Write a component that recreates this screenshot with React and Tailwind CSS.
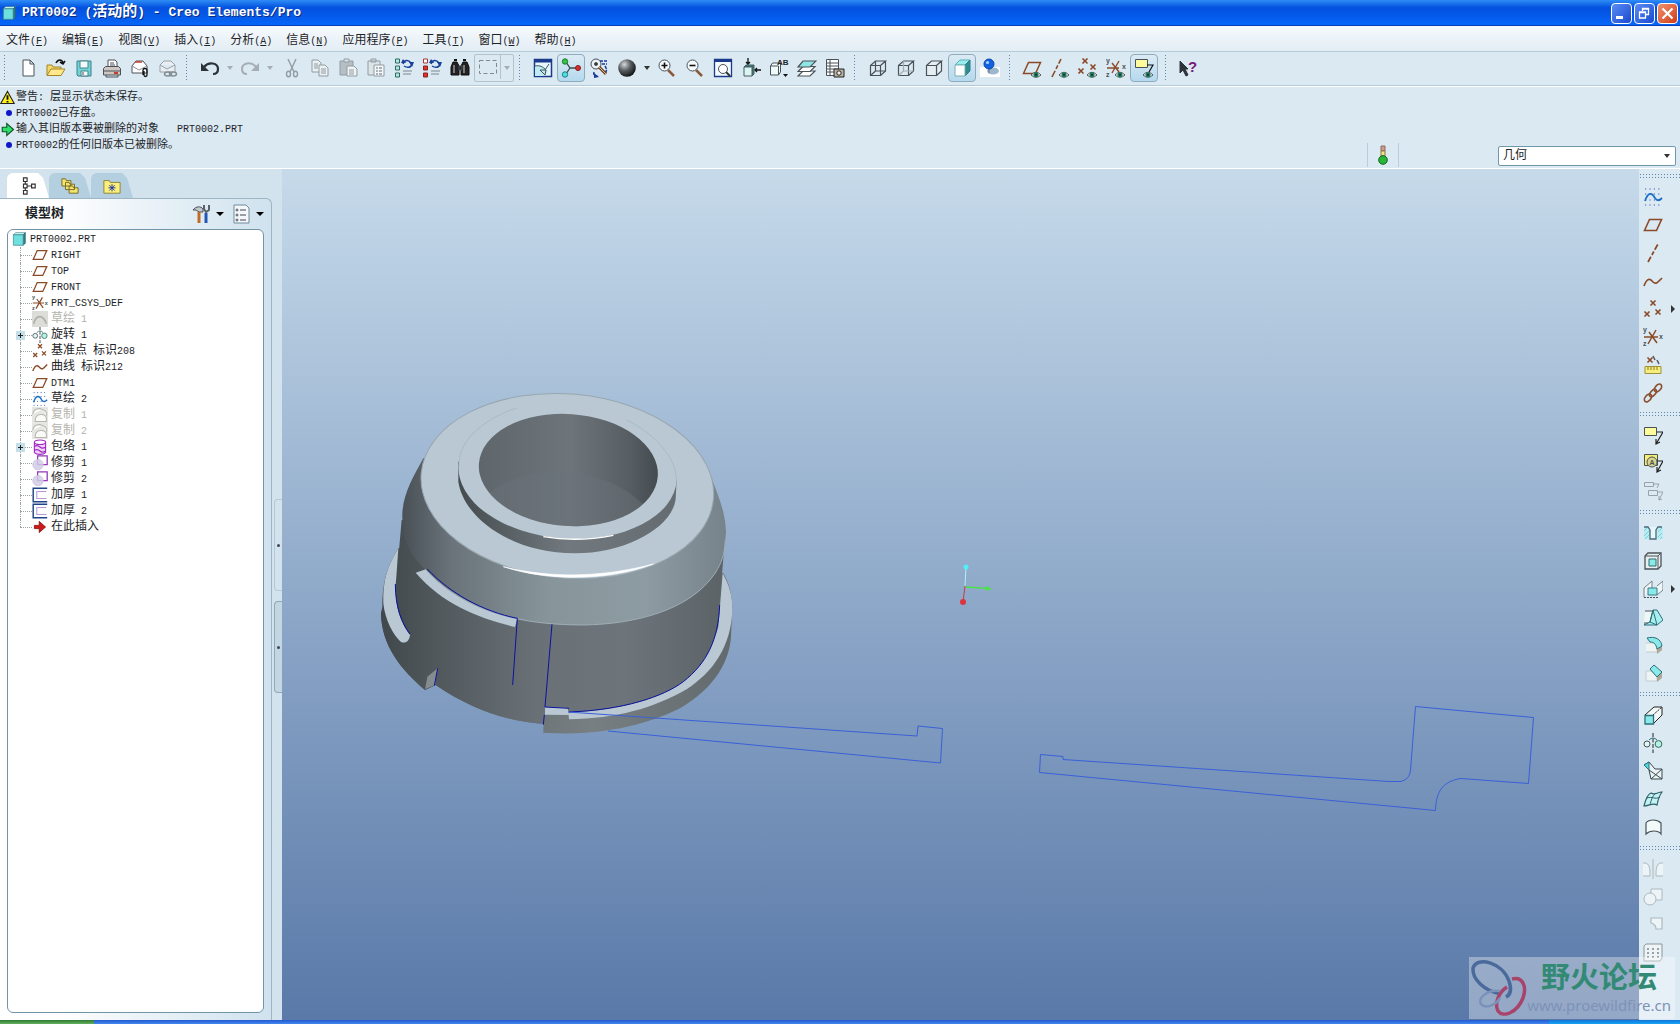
import { Fragment, useState } from 'react';
import clsx from 'clsx';

const Icon = ({ children, className = 'h-5 w-5' }) => (
  <svg viewBox="0 0 20 20" className={clsx('shrink-0', className)} fill="none" stroke="#4a5258" aria-hidden="true">
    {children}
  </svg>
);

const cross = (x, y, c = '#8a4a28', r = 2.5) => (
  <path d={`M${x - r} ${y - r}l${2 * r} ${2 * r}m0 ${-2 * r}l${-2 * r} ${2 * r}`} stroke={c} strokeWidth="1.6" />
);

const Eye = () => (
  <g stroke="none">
    <path d="M9 17q5-5.500 10 0q-5 4.500-10 0z" fill="#f4f8f8" stroke="#333" strokeWidth=".8" />
    <circle cx="14" cy="16.800" r="2.600" fill="#1f7a62" />
    <circle cx="14" cy="16.800" r="1" fill="#0c3028" />
  </g>
);

const Letter = ({ x, y, size = 7, fill = '#4a5258', children }) => (
  <text x={x} y={y} fontSize={size} fill={fill} stroke="none" fontWeight="bold" className="font-['Liberation_Sans',sans-serif]">
    {children}
  </text>
);

const Box = ({ hidden, fill = 'none' }) => (
  <g strokeWidth="1.200">
    <path d="M2.500 7.500h10v10h-10zM2.500 7.500l5-4.500h10l-5 4.500M17.500 3v10l-5 4.500" fill={fill} />
    {hidden && <path d="M7.500 3v10h10M7.500 13l-5 4.500" stroke={hidden} />}
  </g>
);

const ModelBox = () => (
  <>
    <path d="M2 4l3-3h14l-3 3z" fill="#d8ffff" stroke="#3c8488" />
    <path d="M16 4l3-3v15l-3 3z" fill="#2e7f86" stroke="#28666c" />
    <path d="M2 4h14v15H2z" fill="#6ee0e0" stroke="#3c8488" />
  </>
);

const icons = {
  blank: <path d="M5 2h7l4 4v12H5zM12 2v4h4" fill="#fff" />,
  open: (
    <>
      <path d="M1 17V7h5l1 2h8v3" fill="#f3d96b" stroke="#a58427" />
      <path d="M1 17.500l4-6.500h14l-4 6.500z" fill="#ffe98a" stroke="#a58427" />
      <path d="M10 5c2-4 6-4 7 0m-3-1l3 2 2-3" stroke="#111" strokeWidth="1.600" />
    </>
  ),
  save: (
    <>
      <path d="M3 3h14v15H4l-1-1z" fill="#6fd4d6" stroke="#3d808a" />
      <path d="M6 3h8v7H6zM7 13h7v5H7z" fill="#f4fafb" stroke="#48828a" />
      <path d="M9 14v3" />
    </>
  ),
  print: (
    <>
      <path d="M6 10V2h7l2 2v6" fill="#fff" />
      <path d="M8 5h4M8 7h5" />
      <path d="M1.500 10.500l2-2h13l2 2v6.500h-17z" fill="#cfc6c2" />
      <path d="M2 13h16M4 17v2h12v-2" />
      <path d="M12 15h4" stroke="#c2402f" strokeWidth="2" />
    </>
  ),
  mailAttach: (
    <>
      <path d="M2 15V8l4-5h7l4 5v7z" fill="#fff" />
      <path d="M2 8l7 4 8-4" stroke="#8b9297" />
      <path d="M5 4h7" stroke="#c2402f" strokeWidth="1.500" />
      <path d="M13 17v-5c0-2 4-2 4 0v5c0 2-3 2-3 0v-4" stroke="#111" strokeWidth="1.300" />
    </>
  ),
  mailLink: (
    <>
      <path d="M2 14V7l4-4h7l4 4v7zM2 7l7 4 8-4" fill="#e8eef1" stroke="#98a2a8" />
      <ellipse cx="10" cy="16" rx="3.500" ry="2" stroke="#828c92" strokeWidth="1.500" />
      <ellipse cx="15" cy="16" rx="3.500" ry="2" stroke="#828c92" strokeWidth="1.500" />
    </>
  ),
  undo: (
    <>
      <path d="M4 9c5-6 14-4 14 2 0 3-2 5-5 5" stroke="#2b3338" strokeWidth="2.200" />
      <path d="M1 5v8h8z" fill="#2b3338" stroke="none" />
    </>
  ),
  redo: (
    <>
      <path d="M16 9C11 3 2 5 2 11c0 3 2 5 5 5" stroke="#a4aeb4" strokeWidth="2" />
      <path d="M19 5v8h-8z" fill="#a4aeb4" stroke="none" />
    </>
  ),
  cut: (
    <g stroke="#929ca2" strokeWidth="1.400">
      <path d="M6 1l6 13M14 1L8 14" />
      <ellipse cx="6.500" cy="16" rx="2" ry="2.800" />
      <ellipse cx="13.500" cy="16" rx="2" ry="2.800" />
    </g>
  ),
  copy: (
    <g stroke="#929ca2" fill="#eaf0f3">
      <path d="M2 2h6l3 3v9H2z" />
      <path d="M9 7h6l3 3v8H9zM11 11h5M11 13h5M11 15h5M4 6h4M4 8h4M4 10h4" />
    </g>
  ),
  paste: (
    <g stroke="#929ca2">
      <path d="M2 3h13v14H2z" fill="#b4bec3" />
      <path d="M6 1h5v3H6z" fill="#dbe2e6" />
      <path d="M9 8h7l3 3v7H9zM11 12h5M11 14h5M11 16h5" fill="#eef3f5" />
    </g>
  ),
  pasteSpecial: (
    <g stroke="#929ca2">
      <path d="M2 3h12v14H2zM5 1h5v3H5z" fill="#dce4e8" />
      <path d="M8 7h10v11H8z" fill="#f4f8fa" />
      <path d="M10 10h2m1 0h3M10 13h2m1 0h3M10 16h2m1 0h3" strokeWidth="1.500" />
    </g>
  ),
  regen: (
    <>
      <path d="M1.500 1h4v4h-4zM1.500 8h4v4h-4zM1.500 15h4v4h-4z" fill="#b9e6dc" stroke="#2a6b60" />
      <path d="M9 6c1-4 5-5 8-1M18 6c-1 4-5 4-8 2" stroke="#173f9a" strokeWidth="1.500" />
      <path d="M15 4h5l-2 5zM7 5h5l-3-4z" fill="#173f9a" stroke="none" />
      <path d="M9 13h9M9 16h8" stroke="#7d878c" />
    </>
  ),
  regenManager: (
    <>
      <path d="M1.500 1h4v4h-4z" fill="#fff" stroke="#a13a34" />
      <path d="M1.500 8h4v4h-4zM1.500 15h4v4h-4z" fill="#e0322b" stroke="#8a2420" />
      <path d="M9 6c1-4 5-5 8-1M18 6c-1 4-5 4-8 2" stroke="#173f9a" strokeWidth="1.500" />
      <path d="M15 4h5l-2 5zM7 5h5l-3-4z" fill="#173f9a" stroke="none" />
      <path d="M9 13h9M9 16h8" stroke="#7d878c" />
    </>
  ),
  find: (
    <>
      <path d="M3 4h4l2 4v9H1V9zM13 4h4l2 5v8h-8V8z" fill="#222" stroke="#111" />
      <path d="M9 8h3v4H9z" fill="#222" />
      <path d="M4 7v8M14 7v8" stroke="#c8d0d4" />
      <path d="M4 2h3M13 2h3" stroke="#111" strokeWidth="2" />
    </>
  ),
  select: <path d="M1.500 3.500h17v13h-17z" stroke="#7f8a90" strokeDasharray="4 2.500" />,
  repaint: (
    <>
      <path d="M1.500 1.500h17v17h-17z" fill="#e8f6fb" stroke="#1b3a8c" strokeWidth="1.500" />
      <path d="M2 3h16" stroke="#1b3a8c" strokeWidth="3" />
      <path d="M2 8c6-2 10 1 13 6l-5 4H2z" fill="#bfeaf0" stroke="none" />
      <path d="M2 8c5-1 8 1 11 4M16 6l-4 6M7 12l5 5 1-5z" stroke="#44525a" />
    </>
  ),
  spinCenter: (
    <>
      <path d="M5 4l4 6h8M9 10l-4 6" stroke="#3d4a50" strokeWidth="1.300" />
      <circle cx="4" cy="3.500" r="2.700" fill="#39c24a" stroke="#1b7a2a" />
      <circle cx="17" cy="10" r="2.500" fill="#d8302c" stroke="#8a1a18" />
      <circle cx="4" cy="16.500" r="2.700" fill="#4fe0e0" stroke="#1b7f86" />
    </>
  ),
  orientMode: (
    <>
      <circle cx="7" cy="6" r="5" fill="#eef4f6" />
      <circle cx="7" cy="6" r="1.500" fill="#333" />
      <path d="M11 3h8M13 6h5M16 8c2 3 2 5 0 7M5 14c-1 3 1 5 4 4" stroke="#1b3a9c" strokeWidth="1.500" strokeDasharray="3 1" />
      <path d="M10 9l7 7" stroke="#6b4020" strokeWidth="3" />
      <path d="M10 9l7 7" stroke="#e2b98c" />
      <path d="M5 15l5 4-5 1z" fill="#1b3a9c" stroke="none" />
    </>
  ),
  sphere: (
    <>
      <defs>
        <radialGradient id="sphere" cx=".35" cy=".3" r=".7">
          <stop offset="0" stopColor="#d4d8da" />
          <stop offset=".5" stopColor="#5a5f63" />
          <stop offset="1" stopColor="#16191b" />
        </radialGradient>
      </defs>
      <circle cx="10" cy="10" r="8.800" fill="url(#sphere)" stroke="none" />
    </>
  ),
  zoomIn: (
    <>
      <path d="M11 12l6 6" stroke="#8a5a3a" strokeWidth="2.500" />
      <circle cx="7.500" cy="7.500" r="5.500" fill="#f5fafc" />
      <path d="M4.500 7.500h6M7.500 4.500v6" stroke="#111" strokeWidth="1.600" />
    </>
  ),
  zoomOut: (
    <>
      <path d="M11 12l6 6" stroke="#8a5a3a" strokeWidth="2.500" />
      <circle cx="7.500" cy="7.500" r="5.500" fill="#f5fafc" />
      <path d="M4.500 7.500h6" stroke="#111" strokeWidth="1.600" />
    </>
  ),
  refit: (
    <>
      <path d="M1.500 1.500h17v17h-17z" fill="#f2fafd" stroke="#1b3a8c" strokeWidth="1.300" />
      <path d="M2 3h16" stroke="#1b3a8c" strokeWidth="2" />
      <path d="M13 14l4 4" stroke="#333" strokeWidth="2" />
      <circle cx="10" cy="11" r="4.500" fill="#fff" />
    </>
  ),
  reorient: (
    <>
      <path d="M3 9l2-2h8l-2 2zM11 9l2-2v9l-2 2z" fill="#2e8f8a" stroke="#4a5a5e" />
      <path d="M3 9h8v9H3z" fill="#d9f6f4" stroke="#4a5a5e" />
      <path d="M7 0v6m-2-2l2 2 2-2M20 12h-6m2-2l-2 2 2 2" stroke="#111" strokeWidth="1.300" />
    </>
  ),
  savedViews: (
    <>
      <path d="M1.500 8l2-3h8v9l-2 3h-8z" fill="#eefafa" />
      <path d="M1.500 8h8v9" />
      <Letter x="8" y="7" size="8" fill="#222">AB</Letter>
      <path d="M14 16h5l-2.500 3z" fill="#111" stroke="none" />
    </>
  ),
  layers: (
    <g strokeWidth="1.200">
      <path d="M1 18l5-5h12l-5 5z" fill="#fff" />
      <path d="M1 13.500l5-5h12l-5 5z" fill="#fff" />
      <path d="M1 9l5-6h13l-6 6z" fill="#8ee6e4" />
    </g>
  ),
  viewManager: (
    <>
      <path d="M1.500 1.500h12v16h-12zM1.500 5h12M1.500 8h12M1.500 11h12M1.500 14h12M5 1.500v16" fill="#fff" />
      <path d="M9 11h10v8H9z" fill="#b9b4a0" stroke="#222" />
      <circle cx="14" cy="15" r="2.200" fill="#f2f2f2" stroke="#222" />
    </>
  ),
  wireframe: <Box hidden="#4a5258" />,
  hiddenLine: <Box hidden="#a2adb2" />,
  noHidden: <Box fill="#e4eef3" />,
  shaded: (
    <>
      <path d="M3 7l5-5h10l-5 5z" fill="#9becee" stroke="#5bb2b8" />
      <path d="M13 7l5-5v11l-5 5z" fill="#2f8d92" stroke="#2f7d83" />
      <path d="M3 7h10v11H3z" fill="#fff" stroke="#7ab0b6" />
    </>
  ),
  enhanced: (
    <>
      <path d="M0 9h20v10H0z" fill="#fff" stroke="none" />
      <ellipse cx="13" cy="13" rx="6" ry="3.500" fill="#9cb8cf" stroke="none" />
      <path d="M9 10v5" stroke="#7a8a94" strokeWidth="1.500" />
      <circle cx="9" cy="6" r="5" fill="#1262e0" stroke="#0c48ac" />
      <circle cx="7.500" cy="4.500" r="1.600" fill="#a8d0ff" stroke="none" />
    </>
  ),
  plane: <path d="M1.500 15.500l5-11h12l-5 11z" stroke="#8a4a28" strokeWidth="1.600" />,
  planeEye: (
    <>
      <path d="M1.500 15.500l5-11h12l-5 11z" stroke="#8a4a28" strokeWidth="1.500" />
      <Eye />
    </>
  ),
  axis: <path d="M5 19L15 1" stroke="#8a4a28" strokeWidth="1.700" strokeDasharray="6 2 4 2" />,
  axisEye: (
    <>
      <path d="M2 19L11 1" stroke="#8a4a28" strokeWidth="1.600" strokeDasharray="7 2 4 2" />
      <Eye />
    </>
  ),
  points: (
    <>
      {cross(10, 4)}
      {cross(4, 15)}
      {cross(15, 13)}
    </>
  ),
  pointsEye: (
    <>
      {cross(7, 3)}
      {cross(3, 13)}
      {cross(15, 9)}
      <Eye />
    </>
  ),
  csys: (
    <>
      <path d="M1 10h14M6 5l8 11M13 3L5 17" stroke="#8a4a28" strokeWidth="1.500" />
      <Letter x="0" y="5">y</Letter>
      <Letter x="16" y="12">x</Letter>
      <Letter x="0" y="19">z</Letter>
    </>
  ),
  csysEye: (
    <>
      <path d="M1 10h12M6 5l7 9M13 3L6 15" stroke="#8a4a28" strokeWidth="1.400" />
      <Letter x="0" y="5">y</Letter>
      <Letter x="16" y="11">x</Letter>
      <Letter x="0" y="19">z</Letter>
      <Eye />
    </>
  ),
  noteEye: (
    <>
      <path d="M1.500 1.500h12v8h-12z" fill="#fdfb9c" />
      <path d="M13 7h6l-4 7" stroke="#111" strokeWidth="1.200" />
      <Eye />
    </>
  ),
  help: (
    <>
      <path d="M2 3v12l3-3 3 6 2-1-3-6h3z" fill="#2c343a" stroke="#2c343a" />
      <Letter x="10" y="14" size="15" fill="#7a1a78">?</Letter>
    </>
  ),
  sketch: (
    <>
      <path d="M2 2h17M2 7h17M2 13h17M2 18h17" stroke="#3a62b8" strokeDasharray="1.200 3.200" strokeWidth="1.200" />
      <path d="M2 14c3-9 7-9 10-3 2 3 4 3 7 0" stroke="#1c6fc4" strokeWidth="1.800" />
    </>
  ),
  curve: <path d="M1 15c3-8 6-8 9-4 3 3 5 0 9-4" stroke="#8a4a28" strokeWidth="1.700" />,
  analysis: (
    <>
      {cross(7, 5)}
      <path d="M10 1l2 4m2 0l2 4" stroke="#555" strokeWidth="1.500" />
      <path d="M2 11.500h16v7H2z" fill="#f5ee7c" stroke="#a0923a" />
      <path d="M5 12v3M8 12v3M11 12v3M14 12v3" stroke="#8a7a20" />
    </>
  ),
  chain: (
    <g stroke="#8a5030" strokeWidth="1.700">
      <ellipse cx="5" cy="15" rx="4.500" ry="2.800" transform="rotate(-50 5 15)" />
      <ellipse cx="10" cy="10" rx="4.500" ry="2.400" transform="rotate(-50 10 10)" />
      <ellipse cx="15" cy="5" rx="4.500" ry="2.800" transform="rotate(-50 15 5)" />
    </g>
  ),
  note: (
    <>
      <path d="M1.500 2.500h12v8h-12z" fill="#fdfb9c" />
      <path d="M14 7h6l-7 12m0-5v5l4-2" stroke="#222" strokeWidth="1.200" />
    </>
  ),
  annotation: (
    <>
      <path d="M1.500 1.500h13v11h-13z" fill="#f6ee72" />
      <circle cx="9" cy="9" r="5" fill="#d8d58f" />
      <Letter x="6.500" y="12" size="7">A</Letter>
      <path d="M14 8h6l-6 11m0-5v5l4-2" stroke="#222" strokeWidth="1.200" />
    </>
  ),
  annotationSet: (
    <g stroke="#98a3a9">
      <path d="M1.500 1.500h9v4h-9zM5.500 9.500h9v5h-9zM11 3h5l-2 4M15 11h5l-4 8m0-4v4l3-1" />
    </g>
  ),
  hole: (
    <>
      <path d="M1 4h5l2 3v9h6V7l2-3h4v12H1z" fill="#b6ecf2" stroke="none" />
      <path d="M1 8l4-4M1 13l6-6M2 16l5-5M15 9l4-4M15 14l4-4M17 16l2-2" stroke="#7ccfd8" />
      <path d="M1 4h4l2 3v9h6V7l2-3h4" fill="#e6f6fa" stroke="#4a6a78" strokeWidth="1.300" />
    </>
  ),
  shell: (
    <>
      <path d="M2 5l3-3h13v13l-3 3H2z" fill="#e8efee" strokeWidth="1.300" />
      <path d="M2 5h13v13M15 5l3-3" />
      <path d="M6 8h7v7H6z" fill="#8aeaea" stroke="#356a70" />
    </>
  ),
  rib: (
    <>
      <path d="M1 18V9l8-7v7M14 16l6-5V2l-6 5" stroke="#777f85" fill="#eef6f8" />
      <path d="M5 9h9v7H5z" fill="#8aeaea" stroke="#3a7a84" />
      <path d="M1 18.500h14" strokeDasharray="2 1" />
    </>
  ),
  draft: (
    <>
      <path d="M2 4h8l-3 12H1" fill="#eef6f8" />
      <path d="M10 3h4l6 10-6 5H1l6-3z" fill="#a8f0f0" stroke="#2e6f7a" />
      <path d="M10 3L7 15l7 3M10 3l4 15" stroke="#2e6f7a" />
    </>
  ),
  round: (
    <>
      <path d="M3 8h6c4 0 5 3 5 9H3" fill="#eef4f4" stroke="#c3ccd0" />
      <path d="M14 12l5-3v6l-5 4z" fill="#b0a798" stroke="none" />
      <path d="M4 3c8-2 14 1 15 8l-5 3c-1-5-3-7-7-7z" fill="#8aeaea" stroke="#2e6f7a" />
    </>
  ),
  chamfer: (
    <>
      <path d="M3 8h5l6 5v5H3z" fill="#eef4f4" stroke="#c3ccd0" />
      <path d="M14 12l5-3v6l-5 4z" fill="#b0a798" stroke="none" />
      <path d="M7 6l4-4 8 7-5 5z" fill="#8aeaea" stroke="#2e6f7a" />
    </>
  ),
  extrude: (
    <>
      <path d="M2 10l9-8h8v8l-8 8" fill="#f2f7f8" stroke="#222" />
      <path d="M10 10l9-8" stroke="#222" strokeDasharray="2 1" />
      <path d="M2 10.500h8.500V19H2z" fill="#8aeaea" stroke="#2e6f7a" strokeWidth="1.300" />
    </>
  ),
  revolve: (
    <>
      <path d="M10 0v20" stroke="#222" strokeDasharray="4 1.500" />
      <circle cx="4" cy="11" r="3" fill="#dff6f4" />
      <circle cx="15.500" cy="11" r="3.400" fill="#b8f0e6" stroke="#2e6f5a" />
      <path d="M6 7q4-4 8 0" stroke="#2e6f7a" />
    </>
  ),
  sweepBlend: (
    <>
      <path d="M1 4l5-3 6 7h7v10H8L6 9z" fill="#eaf4f5" stroke="#39464c" />
      <path d="M1 4l5-3v8z" fill="#4fd8e0" stroke="#2e6f7a" />
      <path d="M8 18l11-10M6 9l13 9" stroke="#39464c" />
    </>
  ),
  boundary: (
    <>
      <path d="M1 17C3 9 5 5 8 4c4 3 6-1 11-1-3 4-4 8-5 13-4-3-8 1-13 1z" fill="#c4f2f3" stroke="#2e5f6a" strokeWidth="1.200" />
      <path d="M4 9c5-2 8 2 13-1M13 4c-4 3-5 8-6 12" stroke="#2e5f6a" />
    </>
  ),
  style: <path d="M3 17V6c3-4 11-4 15 0v11c-3-4-11-4-15 0z" fill="#f2fafa" strokeWidth="1.200" />,
  mirror: (
    <g stroke="#aeb8bd">
      <path d="M10 0v20" />
      <path d="M0 4h3c4 2 4 7 4 13H0M20 4h-3c-4 2-4 7-4 13h7" fill="#edf4f7" />
    </g>
  ),
  merge: (
    <g stroke="#aeb8bd" fill="#edf4f7">
      <path d="M8 2h11v11H8z" />
      <circle cx="7" cy="12" r="6" />
    </g>
  ),
  trimGray: <path d="M8 3h11v11h-6c0-3-1-5-5-6z" fill="#edf4f7" stroke="#aeb8bd" strokeWidth="1.200" />,
  pattern: (
    <>
      <path d="M1 3l2-2h16v14l-2 3H1z" fill="#eef3f5" stroke="#8d979c" />
      <path d="M4 6h12M4 10h12M4 14h12" stroke="#98a2a8" strokeWidth="2" strokeDasharray="2 3" />
    </>
  ),
  sketchGray: (
    <>
      <path d="M0 0h20v20H0z" fill="#dcdcd8" stroke="none" />
      <path d="M2 16c3-12 12-12 16 0" stroke="#b0b0aa" strokeWidth="2" />
    </>
  ),
  copyGray: (
    <>
      <path d="M0 0h20v20H0z" fill="#e6e6e2" stroke="none" />
      <path d="M1 9c1-7 8-8 12-6M13 3c5 1 6 6 5 8M4 17c0-9 12-10 14-3v4H4z" fill="#fbfbf8" stroke="#b6b6b0" strokeWidth="1.300" />
    </>
  ),
  wrap: (
    <g stroke="#a428c4" strokeWidth="1.400">
      <path d="M3 4v13c3 3 11 3 14 0V4" fill="#ecd4f4" />
      <ellipse cx="10" cy="4" rx="7" ry="2.800" fill="#fff" />
      <path d="M3 9q4-2 7 1t7 0M3 14q4-2 7 1t7 0" />
    </g>
  ),
  trim: (
    <>
      <path d="M7 1h12v11H7z" fill="#fff" stroke="#9238b8" strokeWidth="1.600" />
      <circle cx="7.500" cy="12" r="6.500" fill="#d0cce6" fillOpacity=".85" stroke="#cfc2e0" />
    </>
  ),
  thicken: (
    <>
      <path d="M19 1.500H1.500v17H19" stroke="#20448a" strokeWidth="1.800" />
      <path d="M18 5.500H6v9h12" stroke="#b49ad8" strokeWidth="1.300" />
    </>
  ),
  insert: <path d="M3 8h6V3l8 7-8 7v-5H3z" fill="#d01818" stroke="#7a1010" />,
};

const fileTools = ['blank', 'open', 'save', 'print', 'mailAttach', 'mailLink'];
const editTools = ['cut', 'copy', 'paste', 'pasteSpecial', 'regen', 'regenManager', 'find'];
const zoomTools = ['zoomIn', 'zoomOut', 'refit', 'reorient', 'savedViews', 'layers', 'viewManager'];
const styleTools = ['wireframe', 'hiddenLine', 'noHidden', 'shaded', 'enhanced'];
const datumTools = ['planeEye', 'axisEye', 'pointsEye', 'csysEye', 'noteEye'];

const sideGroups = [
  ['sketch', 'plane', 'axis', 'curve', 'points', 'csys', 'analysis', 'chain'],
  ['note', 'annotation', 'annotationSet'],
  ['hole', 'shell', 'rib', 'draft', 'round', 'chamfer'],
  ['extrude', 'revolve', 'sweepBlend', 'boundary', 'style'],
  ['mirror', 'merge', 'trimGray', 'pattern'],
];

const menus = [
  ['文件', 'F'],
  ['编辑', 'E'],
  ['视图', 'V'],
  ['插入', 'I'],
  ['分析', 'A'],
  ['信息', 'N'],
  ['应用程序', 'P'],
  ['工具', 'T'],
  ['窗口', 'W'],
  ['帮助', 'H'],
];

const treeItems = [
  { icon: 'plane', label: 'RIGHT' },
  { icon: 'plane', label: 'TOP' },
  { icon: 'plane', label: 'FRONT' },
  { icon: 'csys', label: 'PRT_CSYS_DEF' },
  { icon: 'sketchGray', label: '草绘 1', muted: true },
  { icon: 'revolve', label: '旋转 1', expandable: true },
  { icon: 'points', label: '基准点 标识208' },
  { icon: 'curve', label: '曲线 标识212' },
  { icon: 'plane', label: 'DTM1' },
  { icon: 'sketch', label: '草绘 2' },
  { icon: 'copyGray', label: '复制 1', muted: true },
  { icon: 'copyGray', label: '复制 2', muted: true },
  { icon: 'wrap', label: '包络 1', expandable: true },
  { icon: 'trim', label: '修剪 1' },
  { icon: 'trim', label: '修剪 2' },
  { icon: 'thicken', label: '加厚 1' },
  { icon: 'thicken', label: '加厚 2' },
  { icon: 'insert', label: '在此插入' },
];

// latin runs are set one step smaller so two of them take one CJK cell
const Mixed = ({ text, latin = 'text-[10px]' }) => (
  <span className="whitespace-pre">
    {text.split(/([\x20-\x7f]+)/).map((part, i) =>
      i % 2 ? (
        <span key={i} className={latin}>
          {part}
        </span>
      ) : (
        <Fragment key={i}>{part}</Fragment>
      )
    )}
  </span>
);

const Grip = ({ vertical }) => (
  <div
    className={clsx(
      'shrink-0 bg-[radial-gradient(#5f87b0_1px,transparent_1px)] bg-[size:3px_3px]',
      vertical ? 'my-1 h-[6px] w-full' : 'h-7 w-1'
    )}
  />
);

const Tool = ({ name, active, onClick }) => (
  <button
    type="button"
    aria-label={name}
    onClick={onClick}
    className={clsx(
      'flex h-7 w-7 shrink-0 items-center justify-center',
      active && 'rounded-sm border border-[#8fabbd] bg-linear-to-b from-[#dcebf4] to-[#b4d9ee]'
    )}
  >
    <Icon>{icons[name]}</Icon>
  </button>
);

const Arrow = ({ name, light }) => (
  <button type="button" aria-label={name} className="flex h-7 w-3 shrink-0 items-center justify-center">
    <svg viewBox="0 0 6 4" className="h-1 w-1.5" fill={light ? '#a4aeb4' : '#333'} aria-hidden="true">
      <path d="M0 0h6L3 4z" />
    </svg>
  </button>
);

const TitleBar = () => (
  <header className="flex h-[26px] shrink-0 items-center justify-between bg-linear-to-b from-[#2f8cf6] via-[#0450de] via-30% to-[#0768fb] px-0.5 shadow-[inset_0_-1px_0_#0440b8]">
    <h1 className="flex items-center gap-1.5 text-[15px] leading-5 font-bold text-white [text-shadow:1px_1px_0_#0a2a80]">
      <Icon className="h-3.5 w-3.5">
        <ModelBox />
      </Icon>
      <Mixed text="PRT0002 (活动的) - Creo Elements/Pro" latin="text-[13px]" />
    </h1>
    <div className="flex gap-0.5">
      <button type="button" aria-label="最小化" className="h-[21px] w-[21px] rounded-sm border border-white bg-linear-to-br from-[#5b8cf4] to-[#1a48cf]">
        <svg viewBox="0 0 19 19" aria-hidden="true">
          <path d="M4 12h7v3H4z" fill="#fff" />
        </svg>
      </button>
      <button type="button" aria-label="还原" className="h-[21px] w-[21px] rounded-sm border border-white bg-linear-to-br from-[#5b8cf4] to-[#1a48cf]">
        <svg viewBox="0 0 19 19" fill="none" stroke="#fff" aria-hidden="true">
          <path d="M4.500 8h6v6h-6zM4 8.500h7M7.500 7V4.500h6v6H11M7 5h7" strokeWidth="1.300" />
        </svg>
      </button>
      <button type="button" aria-label="关闭" className="h-[21px] w-[21px] rounded-sm border border-white bg-linear-to-br from-[#f0906c] to-[#cf3a10]">
        <svg viewBox="0 0 19 19" stroke="#fff" strokeWidth="2.200" aria-hidden="true">
          <path d="M4.500 4.500l10 10m0-10l-10 10" />
        </svg>
      </button>
    </div>
  </header>
);

const MenuBar = () => (
  <nav className="flex h-[26px] shrink-0 items-center gap-3.5 border-b border-[#b3cbd9] bg-linear-to-b from-[#f6fafd] to-[#e3edf4] px-1.5 pt-1">
    {menus.map(([label, key]) => (
      <button key={key} type="button" className="whitespace-nowrap">
        {label}
        <span className="text-[10px]">
          (<u>{key}</u>)
        </span>
      </button>
    ))}
  </nav>
);

const Toolbar = () => {
  const [spin, setSpin] = useState(true);
  const [display, setDisplay] = useState('shaded');

  return (
    <div className="flex h-[34px] shrink-0 items-center border-b border-[#b3cbd9] pb-px pl-[3px] shadow-[0_1px_0_#fff]">
      <Grip />
      <div className="flex pr-[3px] pl-[7px]">
        {fileTools.map((name) => (
          <Tool key={name} name={name} />
        ))}
      </div>
      <Grip />
      <div className="flex pr-1 pl-[7px]">
        <Tool name="undo" />
        <Arrow name="undo list" light />
        <Tool name="redo" />
        <Arrow name="redo list" light />
        <div className="flex pl-0.5">
          {editTools.map((name) => (
            <Tool key={name} name={name} />
          ))}
        </div>
        <div className="flex rounded-xs border border-[#b3c3cd]">
          <button type="button" aria-label="select" className="flex h-6 w-[26px] items-center justify-center border-r border-[#b3c3cd]">
            <Icon>{icons.select}</Icon>
          </button>
          <div className="-my-0.5 flex items-center">
            <Arrow name="select list" light />
          </div>
        </div>
      </div>
      <Grip />
      <div className="flex pr-1 pl-[7px]">
        <Tool name="repaint" />
        <Tool name="spinCenter" active={spin} onClick={() => setSpin(!spin)} />
        <Tool name="orientMode" />
        <Tool name="sphere" />
        <Arrow name="appearance list" />
        {zoomTools.map((name) => (
          <Tool key={name} name={name} />
        ))}
      </div>
      <Grip />
      <div className="flex pr-1 pl-[7px]">
        {styleTools.map((name) => (
          <Tool key={name} name={name} active={name === display} onClick={() => setDisplay(name)} />
        ))}
      </div>
      <Grip />
      <div className="flex px-1.5">
        {datumTools.map((name) => (
          <Tool key={name} name={name} active={name === 'noteEye'} />
        ))}
      </div>
      <Grip />
      <div className="flex px-1.5">
        <Tool name="help" />
      </div>
    </div>
  );
};

const Messages = () => (
  <section className="flex h-[83px] shrink-0 justify-between border-b border-white pr-1">
    <ul className="pt-[3px] text-[11px] leading-4">
      <li className="flex h-4 items-center">
        <Icon className="mr-px h-[15px] w-[15px]">
          <path d="M10 2l9 16H1z" fill="#ffef1e" stroke="#222" strokeWidth="1.500" />
          <path d="M10 7v6m0 1.500v2" stroke="#111" strokeWidth="2.500" />
        </Icon>
        <Mixed text="警告: 层显示状态未保存。" />
      </li>
      <li className="flex h-4 items-center">
        <span className="mr-1 ml-1.5 h-1.5 w-1.5 rounded-full bg-[#0d18c8]" />
        <Mixed text="PRT0002已存盘。" />
      </li>
      <li className="flex h-4 items-center">
        <Icon className="mr-px h-[15px] w-[15px]">
          <path d="M3 7h6V2l9 8-9 8v-5H3z" fill="#2de06a" stroke="#14532a" strokeWidth="1.500" />
        </Icon>
        <Mixed text="输入其旧版本要被删除的对象   PRT0002.PRT" />
      </li>
      <li className="flex h-4 items-center">
        <span className="mr-1 ml-1.5 h-1.5 w-1.5 rounded-full bg-[#0d18c8]" />
        <Mixed text="PRT0002的任何旧版本已被删除。" />
      </li>
    </ul>
    <div className="flex items-end pb-px">
      <div className="mr-[99px] flex h-6 w-8 items-center justify-center border-x border-[#b9cedb]">
        <svg viewBox="0 0 10 20" className="h-5 w-2.5" aria-hidden="true">
          <path d="M3 1h4v5H3z" fill="#d19a90" stroke="#8a6a60" />
          <path d="M3 6h4v5H3z" fill="#f2e28a" stroke="#8a7a40" />
          <circle cx="5" cy="15" r="4.300" fill="#27b83a" stroke="#14601e" />
        </svg>
      </div>
      <div className="relative mb-px">
        <select aria-label="过滤器" defaultValue="几何" className="h-5 w-[178px] appearance-none rounded-xs border border-[#6f98a8] bg-white px-1 leading-4">
          <option>几何</option>
        </select>
        <svg viewBox="0 0 6 4" className="pointer-events-none absolute top-2 right-1.5 h-1 w-1.5" fill="#333" aria-hidden="true">
          <path d="M0 0h6L3 4z" />
        </svg>
      </div>
    </div>
  </section>
);

const tabIcons = [
  <path key="tree" d="M5 1h4v4H5zM5 8h4v4H5zM5 15h4v4H5zM7 5v3M7 12v3M9 10h5M14 8h4v4h-4z" fill="#fff" stroke="#333" strokeWidth="1.300" />,
  <path key="folders" d="M1 2h4l1 2h5v6H1zM5 6h4l1 2h5v6H5zM9 10h4l1 2h5v6H9z" fill="#f5e46a" stroke="#6f6428" />,
  <Fragment key="favorites">
    <path d="M1 4h6l1 2h11v12H1z" fill="#fbf07c" stroke="#8a7c34" />
    <path d="M10 8v8M6 12h8M7 9l6 6m0-6l-6 6" stroke="#1a2a9c" />
  </Fragment>,
];

const Tabs = () => {
  const [tab, setTab] = useState(0);

  return (
    <div className="flex h-[29px] items-end pl-[7px]">
      {tabIcons.map((icon, i) => (
        <button
          key={i}
          type="button"
          aria-label={`tab ${i + 1}`}
          onClick={() => setTab(i)}
          className={clsx(
            'flex h-[25px] w-[42px] items-center justify-center rounded-tl-md [clip-path:polygon(0_0,74%_0,86%_20%,100%_100%,0_100%)]',
            tab === i ? 'bg-white' : 'bg-[#b4cfe0]'
          )}
        >
          <Icon className="h-[18px] w-[18px]">{icon}</Icon>
        </button>
      ))}
    </div>
  );
};

const ModelTree = () => (
  <aside className="flex w-[282px] shrink-0 bg-[#d3e3ed]">
    <div className="flex min-w-0 flex-1 flex-col">
      <Tabs />
      <div className="flex flex-1 flex-col rounded-tr-md border-t border-r border-[#9db5c4] bg-linear-to-r from-white from-20% to-[#cfe2ee] pr-[7px] pb-[7px] pl-[7px]">
        <div className="flex h-[30px] items-center pl-[18px]">
          <h2 className="flex-1 text-[13px] font-bold">模型树</h2>
          <button type="button" aria-label="设置" className="mr-2 flex items-center gap-1">
            <Icon>
              <path d="M1 6c3-4 8-4 10-1v3H7L4 6z" fill="#c3c9cc" />
              <path d="M7 8v11" stroke="#c26a28" strokeWidth="3" />
              <path d="M14 9v10" stroke="#2456b8" strokeWidth="3" />
              <path d="M12 1v4l2 3 3-2V1" stroke="#59646a" strokeWidth="2" />
            </Icon>
            <svg viewBox="0 0 8 4" className="h-1 w-2" aria-hidden="true">
              <path d="M0 0h8L4 4z" />
            </svg>
          </button>
          <button type="button" aria-label="显示" className="flex items-center gap-1">
            <Icon>
              <path d="M2 1h12l3 3v15H2z" fill="#f4f8fa" stroke="#6f8a9a" />
              <path d="M8 6h6M8 11h6M8 16h6" stroke="#445" />
              <circle cx="5" cy="6" r="1" />
              <circle cx="5" cy="11" r="1" />
              <circle cx="5" cy="16" r="1" />
            </Icon>
            <svg viewBox="0 0 8 4" className="h-1 w-2" aria-hidden="true">
              <path d="M0 0h8L4 4z" />
            </svg>
          </button>
        </div>
        <div className="flex-1 overflow-hidden rounded-md border border-[#7394a6] bg-white pt-px leading-4">
          <div className="flex h-4 items-center gap-1 pl-1">
            <Icon className="h-3.5 w-3.5">
              <ModelBox />
            </Icon>
            <Mixed text="PRT0002.PRT" />
          </div>
          <ul>
            {treeItems.map((item, i) => (
              <li key={i} className="flex h-4 items-center pl-2">
                <span className="relative flex h-4 w-4 shrink-0 items-center">
                  <span
                    className={clsx(
                      'absolute top-0 left-1 border-l border-dotted border-[#9aa3a8]',
                      i === treeItems.length - 1 ? 'h-2' : 'h-4'
                    )}
                  />
                  <span className="ml-1 w-3 border-t border-dotted border-[#9aa3a8]" />
                  {item.expandable && (
                    <button type="button" aria-label="展开" className="absolute top-1 left-0 h-[9px] w-[9px] bg-[#c4dfe8]">
                      <svg viewBox="0 0 9 9" stroke="#222" aria-hidden="true">
                        <path d="M2 4.500h5M4.500 2v5" />
                      </svg>
                    </button>
                  )}
                </span>
                <Icon className="mr-[3px] h-4 w-4">{icons[item.icon]}</Icon>
                <span className={clsx(item.muted && 'text-[#b4b4ae]')}>
                  <Mixed text={item.label} />
                </span>
              </li>
            ))}
          </ul>
        </div>
      </div>
    </div>
    <div className="flex w-2.5 flex-col pt-[330px] pl-0.5">
      <div className="mb-2.5 flex h-[92px] items-center justify-center rounded-l-sm border border-r-0 border-[#b3c9d6]">
        <span className="h-[3px] w-[3px] rounded-full bg-[#445]" />
      </div>
      <div className="flex h-[92px] items-center justify-center rounded-l-sm border border-r-0 border-[#8fa9b8] bg-[#c3d7e3]">
        <span className="h-[3px] w-[3px] rounded-full bg-[#445]" />
      </div>
    </div>
  </aside>
);

const Part = () => (
  <g transform="translate(370 380) scale(.33333)">
    {/* flange */}
    <path
      d="M85 505C52 560 38 600 37 680L33 700C35 800 95 870 165 930L197 915C300 985 400 1022 520 1032V1058C720 1072 860 1020 930 985C1040 920 1078 840 1083 770L1087 680C1086 640 1075 605 1060 580L900 500Z"
      fill="url(#flange)"
    />
    <path d="M1058 580C1078 615 1088 650 1087 690C1083 800 1030 875 950 928C850 985 740 1016 597 1018L594 985C760 990 1000 910 1045 740Z" fill="#b9c8d3" />
    {/* wall */}
    <path
      d="M95 420L78 612L37 690L33 700C35 800 95 870 165 930L197 915C300 985 400 1022 520 1032L527 982L597 997C760 992 880 950 940 905C1010 850 1045 780 1048 680L1067 450Z"
      fill="url(#wall)"
    />
    <path d="M85 505C52 560 38 600 40 670C45 720 70 765 92 785C105 792 118 785 120 765C90 725 70 670 79 590Z" fill="#b9c8d3" />
    <path d="M165 928L195 915L203 865L172 890Z" fill="#858c90" />
    <path d="M137 578L170 567C240 640 340 695 442 715L435 741C330 715 220 675 137 578Z" fill="#b9c8d3" />
    <path d="M525 981L593 984L597 1005L525 1004Z" fill="#b9c8d3" />
    {/* cone */}
    <path
      d="M160 235C130 290 100 340 97 400C95 480 120 525 165 567C260 670 400 735 640 735C800 732 960 690 1035 580C1060 540 1068 500 1067 440C1062 380 1040 340 1022 285Z"
      fill="url(#cone)"
    />
    <path d="M165 567C260 670 400 735 640 735C800 732 960 690 1035 580C1055 550 1064 520 1066 480" fill="none" stroke="#9fadb5" strokeWidth="3" />
    {/* top face */}
    <ellipse cx="592" cy="318" rx="440" ry="276" transform="rotate(5 592 318)" fill="#b9c8d3" stroke="#98a7b0" strokeWidth="3" />
    <path d="M400 560C520 600 700 607 850 552C700 592 540 596 400 560Z" fill="#fff" stroke="#fff" strokeWidth="2" />
    {/* collar */}
    <path d="M265 245V305C280 410 420 520 615 520C770 520 910 440 917 355L920 300Z" fill="url(#collar)" />
    <ellipse cx="593" cy="278" rx="328" ry="198" transform="rotate(4 593 278)" fill="#b9c8d3" />
    <path d="M267 260C262 190 330 120 440 84M770 120C860 165 925 240 919 310" fill="none" stroke="#a3b2bc" strokeWidth="2" />
    <path d="M520 470C580 480 660 480 730 466" fill="none" stroke="#fff" strokeWidth="4" />
    {/* bore */}
    <clipPath id="boreEdge">
      <ellipse cx="595" cy="270" rx="269" ry="168" transform="rotate(4 595 270)" />
    </clipPath>
    <g clipPath="url(#boreEdge)">
      <path d="M300 80h600v400H300z" fill="url(#bore)" />
      <path d="M340 355C440 250 700 240 830 385L700 460H400Z" fill="#6b7379" opacity=".45" />
    </g>
    <g fill="none" stroke="#0a12a0" strokeWidth="3">
      <path d="M172 567C240 640 340 695 442 715L428 915" />
      <path d="M546 733L525 981L597 985M597 996C760 990 880 950 940 905C1010 850 1045 780 1049 675" />
      <path d="M76 612C76 680 95 730 120 762M203 865L193 917M523 1005L520 1034" />
    </g>
  </g>
);

const Viewport = () => (
  <main className="min-w-0 flex-1 bg-linear-to-b from-[#c6daea] to-[#5a79a8]">
    <svg viewBox="282 169 1357 851" preserveAspectRatio="xMidYMid meet" className="h-full w-full" role="img" aria-label="PRT0002">
      <defs>
        <linearGradient id="flange">
          <stop offset="0" stopColor="#454c50" />
          <stop offset=".3" stopColor="#656d72" />
          <stop offset=".6" stopColor="#777f82" />
          <stop offset="1" stopColor="#626a6e" />
        </linearGradient>
        <linearGradient id="wall">
          <stop offset="0" stopColor="#41484c" />
          <stop offset=".15" stopColor="#50575b" />
          <stop offset=".45" stopColor="#697177" />
          <stop offset=".7" stopColor="#6d757b" />
          <stop offset="1" stopColor="#5c6367" />
        </linearGradient>
        <linearGradient id="cone">
          <stop offset="0" stopColor="#495156" />
          <stop offset=".15" stopColor="#697379" />
          <stop offset=".45" stopColor="#87959b" />
          <stop offset=".75" stopColor="#8d9ba2" />
          <stop offset="1" stopColor="#77838a" />
        </linearGradient>
        <linearGradient id="collar">
          <stop offset="0" stopColor="#454c50" />
          <stop offset=".5" stopColor="#71797e" />
          <stop offset="1" stopColor="#646c71" />
        </linearGradient>
        <linearGradient id="bore">
          <stop offset="0" stopColor="#5d656a" />
          <stop offset=".5" stopColor="#6d757b" />
          <stop offset=".8" stopColor="#575e63" />
          <stop offset="1" stopColor="#3c4347" />
        </linearGradient>
      </defs>
      <Part />
      <g fill="none" stroke="#3a60d8">
        <path d="M568 712L917 736L918 726L942.500 728.500L940.500 763L608 731" />
        <path d="M1040.500 754.500L1063 756.500V759.500L1389 781.500H1401Q1410 779 1410.500 770L1415.500 706.500L1533.500 717.500L1528.500 783.500L1461 778.500C1444 781 1436 790 1435.500 810.500L1039.500 772.500Z" />
      </g>
      <path d="M965 586L966 567" stroke="#a8f4f8" />
      <path d="M965 587L990 588.500" stroke="#4ce04c" strokeWidth="1.500" />
      <path d="M965 586L963 602" stroke="#c83a4a" />
      <circle cx="966" cy="567" r="2.500" fill="#4ff0f8" />
      <path d="M986 586l6 3-6 2z" fill="#4ce04c" />
      <circle cx="963" cy="602" r="3" fill="#dc3440" />
    </svg>
  </main>
);

const SideTools = () => (
  <aside className="flex w-[41px] shrink-0 flex-col">
    {sideGroups.map((group) => (
      <Fragment key={group[0]}>
        <Grip vertical />
        {group.map((name) => (
          <div key={name} className="flex items-center">
            <Tool name={name} />
            {(name === 'points' || name === 'rib') && (
              <button type="button" aria-label={`${name} list`} className="ml-1 h-2 w-1">
                <svg viewBox="0 0 4 8" fill="#333" aria-hidden="true">
                  <path d="M0 0l4 4-4 4z" />
                </svg>
              </button>
            )}
          </div>
        ))}
      </Fragment>
    ))}
  </aside>
);

const Watermark = () => (
  <div className="absolute right-[5px] bottom-px flex h-[62px] w-[206px] justify-between bg-white/35">
    <svg viewBox="0 0 60 60" className="h-[60px] w-[60px] shrink-0" fill="none" aria-hidden="true">
      <path d="M32 37C15 34 3 22 4 11C8-1 33 5 40 24C43 33 41 38 37 40" stroke="#4a6a9c" strokeWidth="3.500" />
      <path d="M43 22C54 19 58 30 54 41C48 56 34 61 29 54C25 46 30 35 38 30" stroke="#a8436c" strokeWidth="3.500" />
      <path d="M31 34C18 32 8 42 12 47C16 52 26 49 31 41" stroke="#7a92b8" strokeWidth="2.500" />
    </svg>
    <div className="flex w-[146px] flex-col items-end">
      <p className="pt-2 pr-[18px] text-[29px] leading-8 font-bold text-[#338a74]">野火论坛</p>
      <p className="pr-1 font-['Noto_Sans',sans-serif] text-[15px] leading-4 whitespace-nowrap text-[#7e92b8]">www.proewildfire.cn</p>
    </div>
  </div>
);

const App = () => (
  <div className="flex h-screen flex-col overflow-hidden bg-[#dbe9f2] font-['Liberation_Mono','Noto_Sans_CJK_SC',monospace] text-xs text-[#1d2428]">
    <TitleBar />
    <MenuBar />
    <Toolbar />
    <Messages />
    <div className="relative flex min-h-0 flex-1">
      <ModelTree />
      <Viewport />
      <SideTools />
      <Watermark />
    </div>
    <footer className="flex h-1 shrink-0 bg-linear-to-b from-[#2258d0] to-[#4488f0]">
      <div className="w-[94px] bg-linear-to-b from-[#2f7a34] to-[#62b05c]" />
      <div className="ml-auto w-[131px] bg-linear-to-b from-[#1274d8] to-[#18a4f4]" />
    </footer>
  </div>
);

export default App;
